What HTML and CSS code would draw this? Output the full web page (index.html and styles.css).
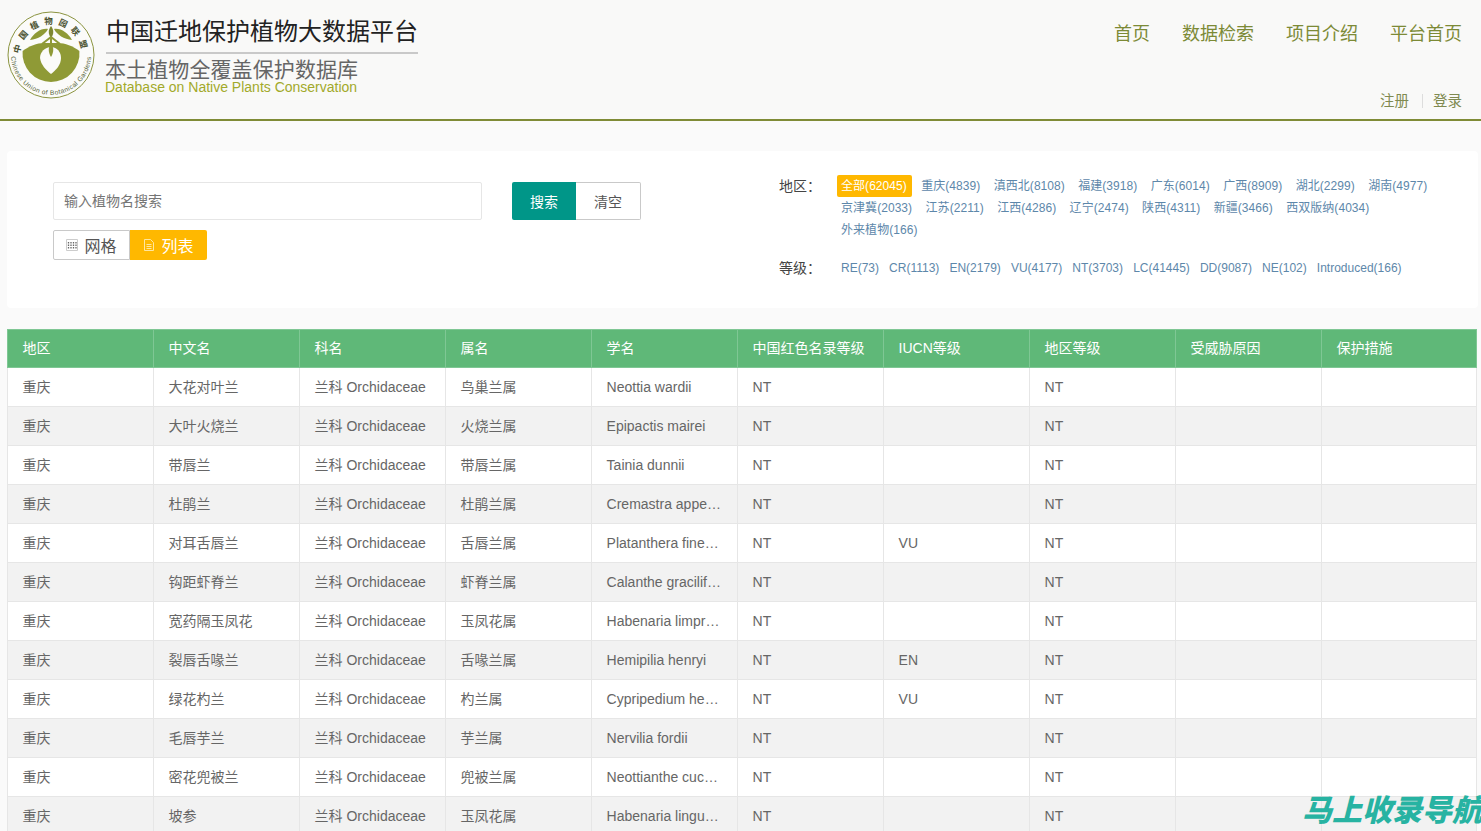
FILE: index.html
```html
<!DOCTYPE html>
<html lang="zh-CN">
<head>
<meta charset="utf-8">
<title>本土植物全覆盖保护数据库</title>
<link rel="stylesheet" href="styles.css">
</head>
<body>
<header class="site-header">
  <div class="brand">
    <svg class="logo" viewBox="0 0 88 88" width="88" height="88" aria-label="中国植物园联盟">
      <defs>
        <path id="arc-top" d="M18 61 A31 31 0 1 1 70 61"/>
        <path id="arc-bottom" d="M5 35 A40 40 0 1 0 83 35"/>
      </defs>
      <circle cx="44" cy="44" r="43" fill="#fbfbf9" stroke="#8b9440" stroke-width="1"/>
      <path d="M15.6 40 C22 35 30 32 37 32 L51 32 C58 32 66 35 72.4 40 A28.5 28.5 0 1 1 15.6 40 Z" fill="#8f9a36"/>
      <path d="M23 29 C27 22 34 17 41 18 C38 24 31 28 23 29 Z" fill="#8f9a36"/>
      <path d="M65 29 C61 22 54 17 47 18 C50 24 57 28 65 29 Z" fill="#8f9a36"/>
      <path d="M44 27 C41 23 41 19 44 15 C47 19 47 23 44 27 Z" fill="#7d8732"/>
      <path d="M44 26 L35 33 M44 26 L53 33 M44 26 V35" stroke="#8f9a36" stroke-width="2" fill="none"/>
      <path d="M44 36 C38 36 33 41 33 47 C34 54 39 59 44 63 C49 59 54 54 54 47 C54 41 50 36 44 36 Z" fill="#fbfbf9"/>
      <path d="M44 33 C41 36 41 41 44 46 C47 41 47 36 44 33 Z" fill="#8f9a36"/>
      <text class="logo-cn"><textPath href="#arc-top" startOffset="50%" text-anchor="middle">中国植物园联盟</textPath></text>
      <text class="logo-en"><textPath href="#arc-bottom" startOffset="50%" text-anchor="middle">Chinese Union of Botanical Gardens</textPath></text>
    </svg>
    <div class="titles">
      <div class="title-main">中国迁地保护植物大数据平台</div>
      <div class="title-sub">本土植物全覆盖保护数据库</div>
      <div class="title-en">Database on Native Plants Conservation</div>
    </div>
  </div>
  <div class="header-right">
    <nav class="main-nav">
      <a>首页</a><a>数据检索</a><a>项目介绍</a><a>平台首页</a>
    </nav>
    <div class="user-nav"><a>注册</a><span class="divider"></span><a>登录</a></div>
  </div>
</header>

<section class="search-panel">
  <div class="search-left">
    <div class="search-row">
      <input class="search-input" type="text" placeholder="输入植物名搜索">
      <div class="search-btns">
        <button class="btn btn-primary">搜索</button><button class="btn btn-plain">清空</button>
      </div>
    </div>
    <div class="view-toggle">
      <button class="toggle">
        <svg class="toggle-icon" viewBox="0 0 12 12" width="12" height="12"><path d="M.5.5h11v11H.5z" fill="none" stroke="#ccc"/><path d="M2.5 3v1.5M5 3v1.5M7.5 3v1.5M10 3v1.5M2.5 5.5V7M5 5.5V7M7.5 5.5V7M10 5.5V7M2.5 8V9.5M5 8V9.5M7.5 8V9.5M10 8V9.5" stroke="#666" stroke-width="1.3"/></svg>
        网格
      </button><button class="toggle toggle-on">
        <svg class="toggle-icon" viewBox="0 0 12 12" width="12" height="12"><path d="M1.5.5h6L10.5 3.5v8h-9z" fill="none" stroke="#ffe6a0"/><path d="M3.5 5.5h5M3.5 7.5h5M3.5 9.5h5" stroke="#ffe6a0"/></svg>
        列表
      </button>
    </div>
  </div>
  <div class="filters">
    <div class="filter-row">
      <span class="filter-label">地区：</span>
      <div class="filter-items">
        <a class="active">全部(62045)</a><a>重庆(4839)</a><a>滇西北(8108)</a><a>福建(3918)</a><a>广东(6014)</a><a>广西(8909)</a><a>湖北(2299)</a><a>湖南(4977)</a><a>京津冀(2033)</a><a>江苏(2211)</a><a>江西(4286)</a><a>辽宁(2474)</a><a>陕西(4311)</a><a>新疆(3466)</a><a>西双版纳(4034)</a><a>外来植物(166)</a>
      </div>
    </div>
    <div class="filter-row filter-row-level">
      <span class="filter-label">等级：</span>
      <div class="filter-items filter-items-level">
        <a>RE(73)</a><a>CR(1113)</a><a>EN(2179)</a><a>VU(4177)</a><a>NT(3703)</a><a>LC(41445)</a><a>DD(9087)</a><a>NE(102)</a><a>Introduced(166)</a>
      </div>
    </div>
  </div>
</section>

<table class="data-table">
  <colgroup>
    <col class="col"><col class="col"><col class="col"><col class="col"><col class="col"><col class="col"><col class="col"><col class="col"><col class="col"><col class="col-last">
  </colgroup>
  <thead>
    <tr><th>地区</th><th>中文名</th><th>科名</th><th>属名</th><th>学名</th><th>中国红色名录等级</th><th>IUCN等级</th><th>地区等级</th><th>受威胁原因</th><th>保护措施</th></tr>
  </thead>
  <tbody>
    <tr><td>重庆</td><td>大花对叶兰</td><td>兰科 Orchidaceae</td><td>鸟巢兰属</td><td>Neottia wardii</td><td>NT</td><td></td><td>NT</td><td></td><td></td></tr>
    <tr><td>重庆</td><td>大叶火烧兰</td><td>兰科 Orchidaceae</td><td>火烧兰属</td><td>Epipactis mairei</td><td>NT</td><td></td><td>NT</td><td></td><td></td></tr>
    <tr><td>重庆</td><td>带唇兰</td><td>兰科 Orchidaceae</td><td>带唇兰属</td><td>Tainia dunnii</td><td>NT</td><td></td><td>NT</td><td></td><td></td></tr>
    <tr><td>重庆</td><td>杜鹃兰</td><td>兰科 Orchidaceae</td><td>杜鹃兰属</td><td>Cremastra appendiculata</td><td>NT</td><td></td><td>NT</td><td></td><td></td></tr>
    <tr><td>重庆</td><td>对耳舌唇兰</td><td>兰科 Orchidaceae</td><td>舌唇兰属</td><td>Platanthera finetiana</td><td>NT</td><td>VU</td><td>NT</td><td></td><td></td></tr>
    <tr><td>重庆</td><td>钩距虾脊兰</td><td>兰科 Orchidaceae</td><td>虾脊兰属</td><td>Calanthe graciliflora</td><td>NT</td><td></td><td>NT</td><td></td><td></td></tr>
    <tr><td>重庆</td><td>宽药隔玉凤花</td><td>兰科 Orchidaceae</td><td>玉凤花属</td><td>Habenaria limprichtii</td><td>NT</td><td></td><td>NT</td><td></td><td></td></tr>
    <tr><td>重庆</td><td>裂唇舌喙兰</td><td>兰科 Orchidaceae</td><td>舌喙兰属</td><td>Hemipilia henryi</td><td>NT</td><td>EN</td><td>NT</td><td></td><td></td></tr>
    <tr><td>重庆</td><td>绿花杓兰</td><td>兰科 Orchidaceae</td><td>杓兰属</td><td>Cypripedium henryi</td><td>NT</td><td>VU</td><td>NT</td><td></td><td></td></tr>
    <tr><td>重庆</td><td>毛唇芋兰</td><td>兰科 Orchidaceae</td><td>芋兰属</td><td>Nervilia fordii</td><td>NT</td><td></td><td>NT</td><td></td><td></td></tr>
    <tr><td>重庆</td><td>密花兜被兰</td><td>兰科 Orchidaceae</td><td>兜被兰属</td><td>Neottianthe cucullata</td><td>NT</td><td></td><td>NT</td><td></td><td></td></tr>
    <tr><td>重庆</td><td>坡参</td><td>兰科 Orchidaceae</td><td>玉凤花属</td><td>Habenaria linguella</td><td>NT</td><td></td><td>NT</td><td></td><td></td></tr>
  </tbody>
</table>

<div class="watermark">马上收录导航</div>
</body>
</html>
```
FILE: styles.css
```css
* { box-sizing: border-box; }
html, body { margin: 0; height: 831px; overflow: hidden; }
body {
  position: relative;
  background: #fafafa;
  color: #666;
  font-family: "Liberation Sans", "Noto Sans CJK SC", sans-serif;
  font-size: 14px;
}

/* Header */
.site-header {
  display: flex;
  justify-content: space-between;
  height: 121px;
  padding: 11px 19px 0 7px;
  background: #f9f9f8;
  border-bottom: 2px solid #7f8b36;
}
.brand { display: flex; align-items: flex-start; }
.logo { flex: none; }
.logo-cn { font-size: 8.5px; font-weight: 700; letter-spacing: 5px; fill: #4a5230; }
.logo-en { font-size: 6.6px; letter-spacing: .45px; fill: #56643a; }
.titles { width: 312px; margin-left: 11px; margin-top: 3px; }
.title-main {
  color: #222;
  font-size: 24px;
  line-height: 36px;
  height: 40px;
  border-bottom: 2px solid #c9c9c9;
  white-space: nowrap;
}
.title-sub { margin-top: 3px; margin-left: -1px; color: #666; font-size: 21px; line-height: 26px; letter-spacing: .1px; white-space: nowrap; }
.title-en { margin-top: -4px; margin-left: -1px; color: #a2a92a; font-size: 14px; line-height: 16px; white-space: nowrap; }
.header-right { display: flex; flex-direction: column; align-items: flex-end; }
.main-nav { display: flex; gap: 32px; margin-top: 9px; color: #7c8a36; font-size: 18px; line-height: 28px; }
.user-nav { display: flex; align-items: center; margin-top: 43px; color: #7f8a50; font-size: 14.5px; line-height: 20px; }
.divider { width: 1px; height: 14px; margin: 0 10px 0 13px; background: #ddd; }

/* Search panel */
.search-panel {
  display: flex;
  height: 157px;
  margin: 30px 3px 0 7px;
  padding: 31px 0 0 46px;
  background: #fff;
  border-radius: 4px;
}
.search-left { flex: none; width: 726px; }
.search-row { display: flex; }
.search-input {
  width: 429px;
  height: 38px;
  padding: 0 10px;
  border: 1px solid #e6e6e6;
  border-radius: 2px;
  background: #fff;
  font: inherit;
  color: #666;
  outline: none;
}
.search-input::placeholder { color: #757575; opacity: 1; }
.search-btns { display: flex; margin-left: 30px; }
.btn { height: 38px; padding: 0; font: inherit; cursor: pointer; }
.btn-primary { width: 64px; border: 0; border-radius: 2px 0 0 2px; background: #009688; color: #fff; }
.btn-plain { width: 65px; border: 1px solid #c9c9c9; border-left: 0; border-radius: 0 2px 2px 0; background: #fff; color: #555; }
.view-toggle { display: flex; margin-top: 10px; }
.toggle {
  display: flex;
  align-items: center;
  justify-content: center;
  gap: 6px;
  width: 77px;
  height: 30px;
  padding: 0;
  border: 1px solid #c9c9c9;
  border-radius: 2px 0 0 2px;
  background: #fff;
  color: #555;
  font: inherit;
  font-size: 16px;
}
.toggle-on { border: 0; border-radius: 0 2px 2px 0; background: #ffb800; color: #fff; }
.toggle-icon { flex: none; }

/* Filters */
.filters { flex: none; width: 660px; margin-top: -7px; }
.filter-row { display: flex; }
.filter-row-level { margin-top: 16px; }
.filter-label { flex: none; width: 58px; height: 21px; margin-top: -1px; color: #444; font-family: "Noto Sans CJK TC", sans-serif; font-size: 14px; line-height: 22px; }
.filter-items { display: flex; flex-wrap: wrap; column-gap: 5.4px; width: 600px; font-size: 12px; letter-spacing: .05px; line-height: 22px; color: #5d87aa; }
.filter-items a { padding: 0 4px; white-space: nowrap; border-radius: 2px; }
.filter-items .active { padding: 0 5px 0 4px; background: #ffb800; color: #fff; }
.filter-items-level { column-gap: 2.1px; letter-spacing: 0; }

/* Table */
.data-table {
  width: 1469px;
  margin: 21px 0 0 7px;
  table-layout: fixed;
  border-collapse: collapse;
  background: #fff;
  color: #666;
}
.col { width: 146px; }
.col-last { width: 155px; }
.data-table th, .data-table td {
  height: 39px;
  padding: 0 15px 0 14.6px;
  border: 1px solid #e6e6e6;
  font-weight: 400;
  line-height: 20px;
  text-align: left;
  white-space: nowrap;
  overflow: hidden;
  text-overflow: ellipsis;
}
.data-table th { height: 38px; padding-bottom: 2px; background: #5fb878; border-color: #7fc794; color: #fff; }
.data-table tbody tr:nth-child(even) { background: #f2f2f2; }

/* Overlay */
.watermark {
  position: absolute;
  left: 1302px;
  top: 791px;
  width: 190px;
  color: #27b3a2;
  font-size: 30px;
  font-weight: 900;
  line-height: 34px;
  font-style: italic;
  white-space: nowrap;
  font-family: "Noto Sans CJK SC", sans-serif;
}
```
